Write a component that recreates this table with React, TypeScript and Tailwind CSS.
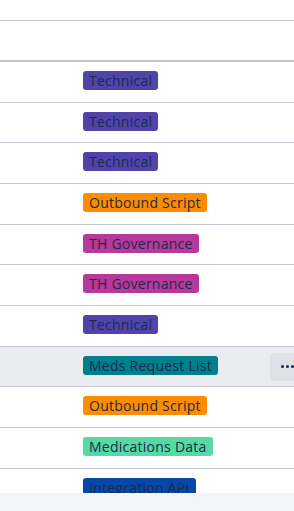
const rows: { label: string; bg: string; active?: boolean }[] = [
  { label: "Technical", bg: "bg-[#5243aa]" },
  { label: "Technical", bg: "bg-[#5243aa]" },
  { label: "Technical", bg: "bg-[#5243aa]" },
  { label: "Outbound Script", bg: "bg-[#ff8b00]" },
  { label: "TH Governance", bg: "bg-[#b8399c]" },
  { label: "TH Governance", bg: "bg-[#b8399c]" },
  { label: "Technical", bg: "bg-[#5243aa]" },
  { label: "Meds Request List", bg: "bg-[#00808c]", active: true },
  { label: "Outbound Script", bg: "bg-[#ff8b00]" },
  { label: "Medications Data", bg: "bg-[#57d9a3]" },
  { label: "Integration API", bg: "bg-[#0747a6]" },
];

export default function App() {
  return (
    <div className="w-[294px] h-[511px] overflow-hidden bg-white font-['Open_Sans',sans-serif] text-[#172b4d]">
      <div className="h-[21px] border-b border-[#c1c7d0]" />
      <div className="h-[41px] border-b-2 border-[#c1c7d0]" />
      <div className="h-[431px] overflow-hidden">
        {rows.map((r, i) => (
          <div
            key={i}
            className={`h-[40.67px] border-b border-[#c1c7d0] flex items-start pt-[6px] ${
              r.active ? "bg-[#ebecf0]" : ""
            }`}
          >
            <div className="w-[83px] shrink-0" />
            <div className="w-[187px] shrink-0">
              <span
                className={`inline-block rounded-[3px] ${r.bg} px-[6px] h-[19px] leading-[19px] text-[14px] tracking-[0.25px] whitespace-nowrap`}
              >
                {r.label}
              </span>
            </div>
            {r.active && (
              <div className="w-[40px] shrink-0 h-[28px] rounded-[3px] bg-[#dfe1e6] flex items-center gap-[2px] pl-[11px]">
                <span className="w-[3px] h-[3px] rounded-full bg-[#172b4d]" />
                <span className="w-[3px] h-[3px] rounded-full bg-[#172b4d]" />
                <span className="w-[3px] h-[3px] rounded-full bg-[#172b4d]" />
              </div>
            )}
          </div>
        ))}
      </div>
      <div className="h-[18px] bg-[#f4f5f7]" />
    </div>
  );
}
